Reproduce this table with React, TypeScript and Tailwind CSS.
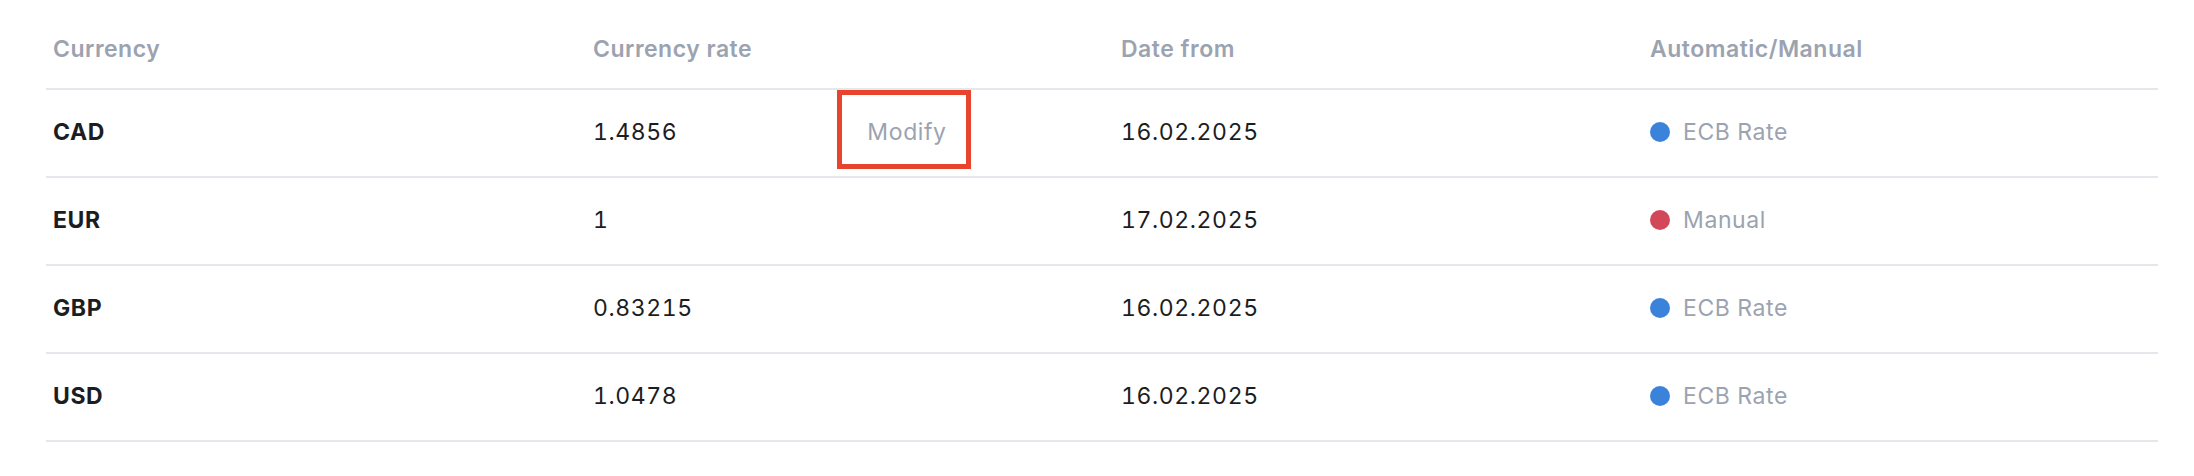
import React from "react";

type Row = { code: string; rate: string; date: string; kind: "ecb" | "manual"; modify?: boolean };

const rows: Row[] = [
  { code: "CAD", rate: "1.4856", date: "16.02.2025", kind: "ecb", modify: true },
  { code: "EUR", rate: "1", date: "17.02.2025", kind: "manual" },
  { code: "GBP", rate: "0.83215", date: "16.02.2025", kind: "ecb" },
  { code: "USD", rate: "1.0478", date: "16.02.2025", kind: "ecb" },
];

export default function App() {
  return (
    <div className="w-[2194px] h-[476px] bg-white pl-[46px] pr-[36px]" style={{ fontFamily: "Inter, 'Noto Sans', sans-serif" }}>
      <div className="grid grid-cols-[540px_528px_529px_1fr] h-[90px] border-b-2 border-[#e4e7ec] pt-[36px] text-[23px] leading-[26px] tracking-[0.5px] font-semibold text-[#9ca3b0]">
        <div className="pl-[7px]">Currency</div>
        <div className="pl-[7px]">Currency rate</div>
        <div className="pl-[7px]">Date from</div>
        <div className="pl-[7px]">Automatic/Manual</div>
      </div>
      {rows.map((r) => (
        <div key={r.code} className="grid grid-cols-[540px_528px_529px_1fr] h-[88px] pb-[3px] border-b-2 border-[#e4e7ec] items-center text-[23px] leading-[26px] tracking-[0.6px] tabular-nums">
          <div className="pl-[7px] font-bold text-[#1c1d21]">{r.code}</div>
          <div className="pl-[7px] h-full flex items-center text-[#1c1d21]">
            <span className="w-[244px]">{r.rate}</span>
            {r.modify && (
              <div className="self-start w-[134px] h-[79px] border-[5px] border-[#e8432c] flex items-center justify-center pt-[4px] pl-[6px] text-[#9ca3b0]">
                Modify
              </div>
            )}
          </div>
          <div className="pl-[7px] text-[#1c1d21]">{r.date}</div>
          <div className="pl-[7px] flex items-center gap-[13px] text-[#9ca3b0]">
            <span className={`w-[20px] h-[20px] rounded-full ${r.kind === "ecb" ? "bg-[#3b82db]" : "bg-[#d3475b]"}`} />
            <span>{r.kind === "ecb" ? "ECB Rate" : "Manual"}</span>
          </div>
        </div>
      ))}
    </div>
  );
}
